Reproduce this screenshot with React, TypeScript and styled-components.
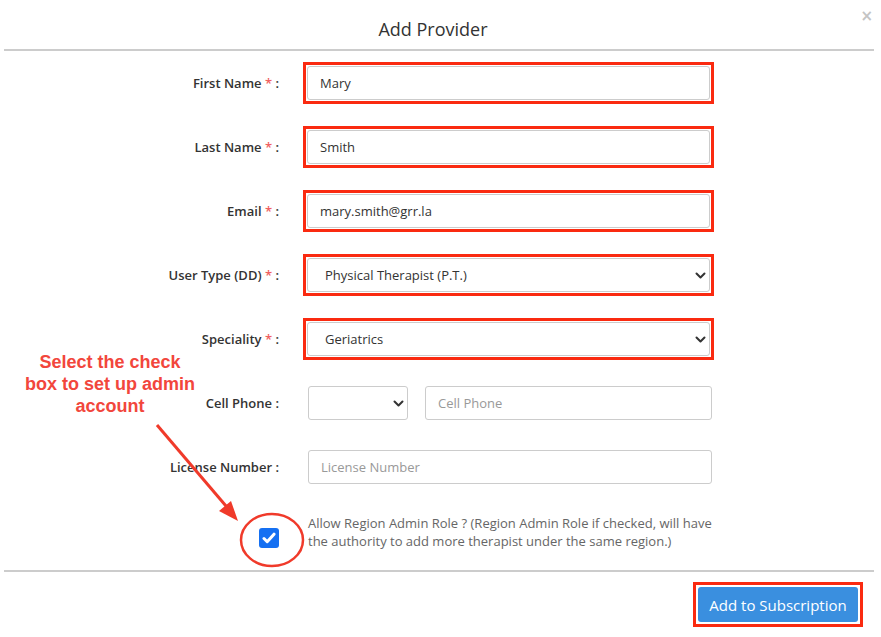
import React from 'react'
import styled, { createGlobalStyle } from 'styled-components'

const GlobalStyle = createGlobalStyle`
  html, body {
    margin: 0;
    padding: 0;
    background: #fff;
  }
  body {
    font-family: 'Open Sans', 'Noto Sans', Arial, sans-serif;
    color: #333;
  }
`

const RED = '#fa2a10'

const Modal = styled.div`
  position: relative;
  width: 870px;
  margin-left: 4px;
  background: #fff;
`

const Header = styled.div`
  height: 49px;
  display: flex;
  align-items: center;
  justify-content: center;
  padding-right: 12px;
  border-bottom: 2px solid #ccc;
`

const Title = styled.h4`
  margin: 0;
  padding-top: 9px;
  font-size: 18px;
  font-weight: 400;
  color: #333;
  line-height: 24px;
`

const Close = styled.button`
  position: absolute;
  top: 7px;
  right: 1px;
  border: 0;
  background: none;
  padding: 0;
  font-family: 'DejaVu Sans', sans-serif;
  font-size: 15px;
  font-weight: 700;
  color: #c4c4c4;
  cursor: pointer;
`

const Body = styled.div`
  display: flex;
  flex-direction: column;
  gap: 30px;
  padding: 15px 0 20px;
`

const Row = styled.div<{ $top?: boolean }>`
  display: grid;
  grid-template-columns: 275px 404px;
  column-gap: 29px;
  align-items: ${(p) => (p.$top ? 'start' : 'center')};
  min-height: 34px;
`

const Label = styled.label`
  text-align: right;
  font-size: 13px;
  font-weight: 600;
  color: #333;
  white-space: nowrap;
`

const Star = styled.span`
  color: #f06060;
`

/* square red annotation frame drawn round a field */
const Marked = styled.div`
  margin: -5px -2px -5px -5px;
  padding: 1px;
  border: 3px solid ${RED};
`

const Input = styled.input`
  display: block;
  box-sizing: border-box;
  width: 100%;
  height: 34px;
  padding: 0 12px;
  border: 1px solid #ccc;
  border-radius: 3px;
  font-family: inherit;
  font-size: 13px;
  color: #333;
  background: #fff;
  outline: none;
  &::placeholder {
    color: #999;
  }
`

const SelectWrap = styled.div`
  position: relative;
  height: 34px;
`

const Select = styled.select`
  display: block;
  appearance: none;
  box-sizing: border-box;
  width: 100%;
  height: 34px;
  padding: 0 30px 0 17px;
  border: 1px solid #ccc;
  border-radius: 3px;
  background: #fff;
  font-family: inherit;
  font-size: 13px;
  color: #333;
  outline: none;
`

const Chevron = styled.svg`
  position: absolute;
  right: 4px;
  top: 14px;
  pointer-events: none;
`

const PhoneGroup = styled.div`
  display: grid;
  grid-template-columns: 100px 1fr;
  gap: 17px;
`

const CheckBox = styled.span`
  justify-self: end;
  margin-top: 14px;
  width: 20px;
  height: 20px;
  border-radius: 3px;
  background: #1570f2;
  display: flex;
  align-items: center;
  justify-content: center;
`

const Note = styled.p`
  margin: 0;
  font-size: 13px;
  line-height: 18px;
  color: #666;
`

const Footer = styled.div`
  display: flex;
  justify-content: flex-end;
  padding: 15px 16px 20px;
  border-top: 2px solid #ccc;
`

const SubmitFrame = styled.div`
  padding: 2px;
  margin: -5px;
  border: 3px solid ${RED};
`

const SubmitButton = styled.button`
  display: block;
  width: 160px;
  height: 35px;
  padding: 0;
  border: 0;
  border-radius: 3px;
  background: #3a8fdf;
  color: #fff;
  font-family: inherit;
  font-size: 15px;
`

const Callout = styled.div`
  position: absolute;
  left: 6px;
  top: 351px;
  width: 200px;
  text-align: center;
  font-family: 'Liberation Sans', Arial, sans-serif;
  font-weight: 700;
  font-size: 18px;
  line-height: 22px;
  color: #f2463c;
`

const Overlay = styled.svg`
  position: absolute;
  left: -4px;
  top: 0;
  pointer-events: none;
`

const ChevronIcon = () => (
  <Chevron width="11" height="7" viewBox="0 0 11 7">
    <path d="M1.5 1.5l4 4 4-4" fill="none" stroke="#333" strokeWidth="2" strokeLinecap="round" strokeLinejoin="round" />
  </Chevron>
)

export default function App() {
  return (
    <>
      <GlobalStyle />
      <Modal>
        <Header>
          <Title>Add Provider</Title>
        </Header>
        <Close>×</Close>
        <Body>
          <Row>
            <Label>
              First Name <Star>*</Star> :
            </Label>
            <Marked>
              <Input defaultValue="Mary" />
            </Marked>
          </Row>
          <Row>
            <Label>
              Last Name <Star>*</Star> :
            </Label>
            <Marked>
              <Input defaultValue="Smith" />
            </Marked>
          </Row>
          <Row>
            <Label>
              Email <Star>*</Star> :
            </Label>
            <Marked>
              <Input defaultValue="mary.smith@grr.la" />
            </Marked>
          </Row>
          <Row>
            <Label>
              User Type (DD) <Star>*</Star> :
            </Label>
            <Marked>
              <SelectWrap>
                <Select defaultValue="pt">
                  <option value="pt">Physical Therapist (P.T.)</option>
                </Select>
                <ChevronIcon />
              </SelectWrap>
            </Marked>
          </Row>
          <Row>
            <Label>
              Speciality <Star>*</Star> :
            </Label>
            <Marked>
              <SelectWrap>
                <Select defaultValue="ger">
                  <option value="ger">Geriatrics</option>
                </Select>
                <ChevronIcon />
              </SelectWrap>
            </Marked>
          </Row>
          <Row>
            <Label>Cell Phone :</Label>
            <PhoneGroup>
              <SelectWrap>
                <Select defaultValue="">
                  <option value=""></option>
                </Select>
                <ChevronIcon />
              </SelectWrap>
              <Input placeholder="Cell Phone" />
            </PhoneGroup>
          </Row>
          <Row>
            <Label>License Number :</Label>
            <Input placeholder="License Number" />
          </Row>
          <Row $top>
            <CheckBox>
              <svg width="14" height="12" viewBox="0 0 14 12">
                <path d="M2 6.5l3.2 3.2L12 2.2" fill="none" stroke="#fff" strokeWidth="3" strokeLinecap="round" strokeLinejoin="round" />
              </svg>
            </CheckBox>
            <Note>
              Allow Region Admin Role ? (Region Admin Role if checked, will have the authority to add more therapist
              under the same region.)
            </Note>
          </Row>
        </Body>
        <Footer>
          <SubmitFrame>
            <SubmitButton>Add to Subscription</SubmitButton>
          </SubmitFrame>
        </Footer>
        <Callout>
          Select the check
          <br />
          box to set up admin
          <br />
          account
        </Callout>
        <Overlay width="881" height="637" viewBox="0 0 881 637">
          <ellipse cx="272" cy="540" rx="31" ry="26" fill="none" stroke="#f03a2a" strokeWidth="2.5" />
          <line x1="157" y1="425" x2="226" y2="506" stroke="#f03a2a" strokeWidth="3" />
          <polygon points="238,521 219,511 231,501" fill="#f03a2a" />
        </Overlay>
      </Modal>
    </>
  )
}
